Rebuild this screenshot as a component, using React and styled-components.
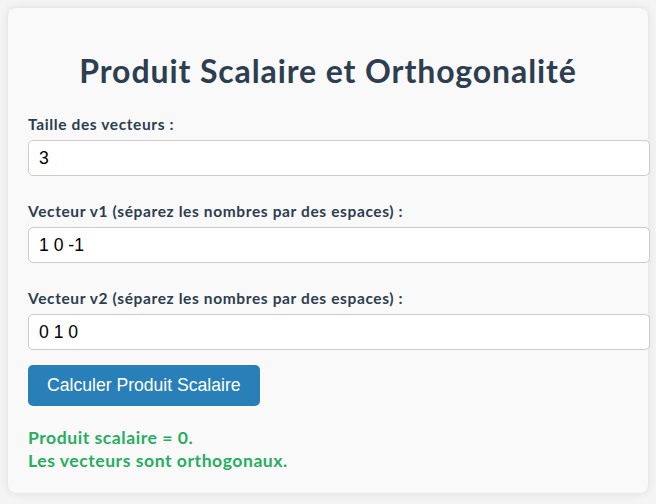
import React, { useState } from "react";
import styled, { createGlobalStyle } from "styled-components";

const GlobalStyle = createGlobalStyle`
  body {
    margin: 0;
    padding: 8px;
    background: #f4f4f4;
    font-family: Lato, "Open Sans", sans-serif;
  }
`;

const Card = styled.div`
  width: 600px;
  margin: 0 auto;
  padding: 20px;
  background: #f9f9f9;
  border-radius: 8px;
  box-shadow: 0 0 10px rgba(0, 0, 0, 0.1);
`;

const Title = styled.h1`
  margin: 24px 0;
  text-align: center;
  color: #2c3e50;
  font-size: 32px;
  line-height: 38.4px;
  font-weight: 700;
  letter-spacing: 0.028em;
`;

const Field = styled.div`
  margin-bottom: ${(p) => p.$gap}px;
`;

const Label = styled.label`
  display: block;
  margin-bottom: 6px;
  color: #2c3e50;
  font-size: 15.5px;
  line-height: 20px;
  font-weight: 700;
  letter-spacing: 0.04em;
`;

const Input = styled.input`
  box-sizing: content-box;
  display: block;
  width: 100%;
  margin: 0;
  padding: 7px 10px;
  border: 1px solid #ccc;
  border-radius: 5px;
  background: #fff;
  color: #000;
  font-family: "Liberation Sans", Arial, sans-serif;
  font-size: 17.6px;
  line-height: 20px;
  outline: none;
`;

const Button = styled.button`
  display: block;
  padding: 10px 19px;
  border: none;
  border-radius: 5px;
  background: #2980b9;
  color: #fff;
  font-family: "Liberation Sans", Arial, sans-serif;
  font-size: 17.6px;
  line-height: 20.5px;
  cursor: pointer;
`;

const Result = styled.div`
  margin-top: 20px;
  color: #27ae60;
  font-size: 17.6px;
  line-height: 23.3px;
  font-weight: 700;
  letter-spacing: 0.03em;
`;

const fields = [
  { id: "taille", label: "Taille des vecteurs :", value: "3" },
  { id: "v1", label: "Vecteur v1 (séparez les nombres par des espaces) :", value: "1 0 -1" },
  { id: "v2", label: "Vecteur v2 (séparez les nombres par des espaces) :", value: "0 1 0" },
];

export default function App() {
  const [values, setValues] = useState(fields.map((f) => f.value));

  return (
    <Card>
      <GlobalStyle />
      <Title>Produit Scalaire et Orthogonalité</Title>
      {fields.map((f, i) => (
        <Field key={f.id} $gap={i === fields.length - 1 ? 15 : 25}>
          <Label htmlFor={f.id}>{f.label}</Label>
          <Input
            id={f.id}
            value={values[i]}
            onChange={(e) => {
              const next = [...values];
              next[i] = e.target.value;
              setValues(next);
            }}
          />
        </Field>
      ))}
      <Button>Calculer Produit Scalaire</Button>
      <Result>
        Produit scalaire = 0.
        <br />
        Les vecteurs sont orthogonaux.
      </Result>
    </Card>
  );
}
